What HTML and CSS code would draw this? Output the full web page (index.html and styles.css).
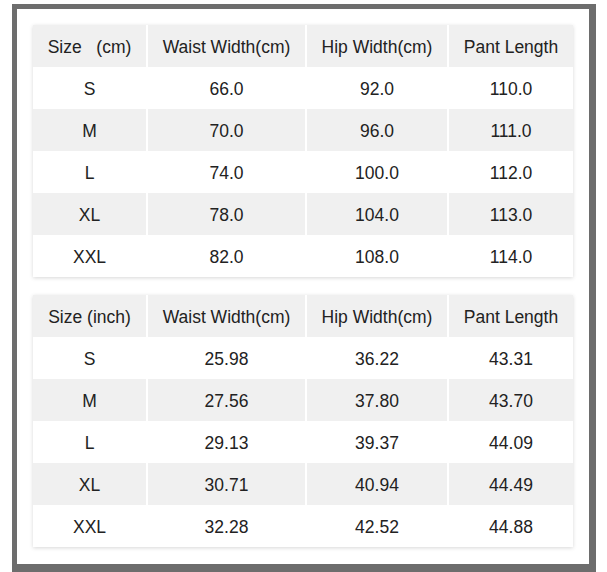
FILE: index.html
```html
<!DOCTYPE html>
<html>
<head>
<meta charset="utf-8">
<link rel="stylesheet" href="styles.css">
</head>
<body>
<div class="frame">
  <table class="size-table">
    <colgroup>
      <col class="c1"><col class="c2"><col class="c3"><col class="c4">
    </colgroup>
    <thead>
      <tr><th>Size&nbsp;&nbsp;&nbsp;(cm)</th><th>Waist Width(cm)</th><th>Hip Width(cm)</th><th>Pant Length</th></tr>
    </thead>
    <tbody>
      <tr><td>S</td><td>66.0</td><td>92.0</td><td>110.0</td></tr>
      <tr><td>M</td><td>70.0</td><td>96.0</td><td>111.0</td></tr>
      <tr><td>L</td><td>74.0</td><td>100.0</td><td>112.0</td></tr>
      <tr><td>XL</td><td>78.0</td><td>104.0</td><td>113.0</td></tr>
      <tr><td>XXL</td><td>82.0</td><td>108.0</td><td>114.0</td></tr>
    </tbody>
  </table>
  <table class="size-table">
    <colgroup>
      <col class="c1"><col class="c2"><col class="c3"><col class="c4">
    </colgroup>
    <thead>
      <tr><th>Size (inch)</th><th>Waist Width(cm)</th><th>Hip Width(cm)</th><th>Pant Length</th></tr>
    </thead>
    <tbody>
      <tr><td>S</td><td>25.98</td><td>36.22</td><td>43.31</td></tr>
      <tr><td>M</td><td>27.56</td><td>37.80</td><td>43.70</td></tr>
      <tr><td>L</td><td>29.13</td><td>39.37</td><td>44.09</td></tr>
      <tr><td>XL</td><td>30.71</td><td>40.94</td><td>44.49</td></tr>
      <tr><td>XXL</td><td>32.28</td><td>42.52</td><td>44.88</td></tr>
    </tbody>
  </table>
</div>
</body>
</html>
```

FILE: styles.css
```css
html, body {
  margin: 0;
  padding: 0;
  background: #ffffff;
}
body {
  font-family: "Liberation Sans", Arial, sans-serif;
  color: #222222;
}
.frame {
  box-sizing: border-box;
  margin: 4px 0 0 12px;
  width: 584px;
  height: 568px;
  border-style: solid;
  border-color: #6d6d6d;
  border-width: 5px 7px 8px 5px;
  background: #ffffff;
  padding: 16px 16px 0 16px;
  display: flex;
  flex-direction: column;
  gap: 18px;
}
.size-table {
  width: 540px;
  table-layout: fixed;
  border-collapse: separate;
  border-spacing: 0;
  box-shadow: 0 1px 4px rgba(0, 0, 0, 0.16);
  font-size: 17.5px;
}
.c1 { width: 115px; }
.c2 { width: 159px; }
.c3 { width: 142px; }
.c4 { width: 124px; }
.size-table th,
.size-table td {
  height: 42px;
  padding: 2px 0 0 0;
  text-align: center;
  vertical-align: middle;
  font-weight: normal;
  border-right: 2px solid #ffffff;
  box-sizing: border-box;
  white-space: nowrap;
}
.size-table th:last-child,
.size-table td:last-child {
  border-right: 0;
}
.size-table thead tr,
.size-table tbody tr:nth-child(even) {
  background: #f0f0f0;
}
.size-table tbody tr:nth-child(odd) {
  background: #ffffff;
}
```
